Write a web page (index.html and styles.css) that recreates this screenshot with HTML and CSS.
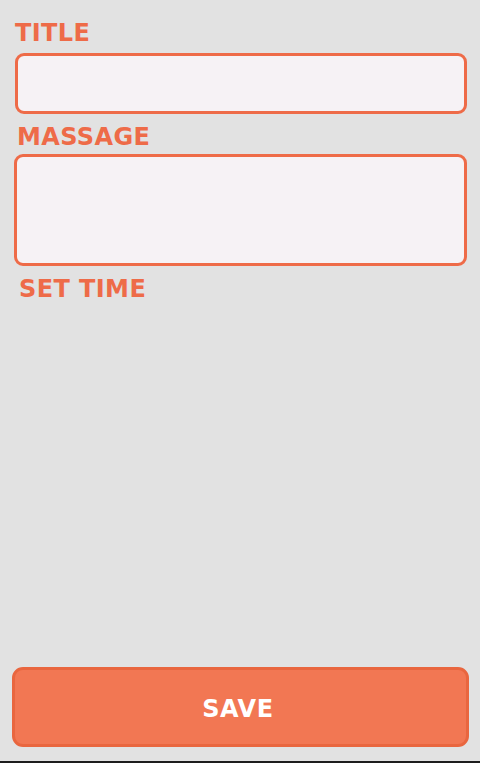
FILE: index.html
```html
<!DOCTYPE html>
<html>
<head>
<meta charset="utf-8">
<link rel="stylesheet" href="styles.css">
</head>
<body>
<div class="screen">
  <form class="form">
    <label class="label label-title">TITLE</label>
    <input class="field field-title" type="text">
    <label class="label label-message">MASSAGE</label>
    <textarea class="field field-message"></textarea>
    <label class="label label-time">SET TIME</label>
  </form>
  <div class="actions">
    <button class="save" type="button">SAVE</button>
  </div>
  <div class="bottom-edge"></div>
</div>
</body>
</html>
```
FILE: styles.css
```css
html, body {
  margin: 0;
  padding: 0;
  background: #e2e2e2;
}
.screen {
  height: 763px;
  display: flex;
  flex-direction: column;
  font-family: "DejaVu Sans", Verdana, sans-serif;
}
.form {
  flex: 1;
  display: flex;
  flex-direction: column;
  padding: 19px 13px 0 14px;
}
.label {
  display: block;
  color: #ee6b48;
  font-weight: bold;
  font-size: 24px;
  line-height: 28px;
  letter-spacing: 0.4px;
}
.label-title {
  margin-left: 1px;
}
.label-message {
  margin-top: 9px;
  margin-left: 3px;
}
.label-time {
  margin-top: 9px;
  margin-left: 5px;
}
.field {
  box-sizing: border-box;
  display: block;
  background: #f6f2f5;
  border: 3px solid #ee6b48;
  border-radius: 9px;
  outline: none;
  margin: 0;
  padding: 0;
  resize: none;
  font-family: inherit;
}
.field-title {
  margin-top: 6px;
  margin-left: 1px;
  height: 61px;
  width: 452px;
}
.field-message {
  margin-top: 3px;
  height: 112px;
  width: 453px;
}
.actions {
  padding: 0 11px 14px 12px;
}
.save {
  box-sizing: border-box;
  display: block;
  width: 457px;
  height: 80px;
  background: #f27753;
  border: 3px solid #e9663f;
  border-radius: 11px;
  color: #ffffff;
  font-family: inherit;
  font-weight: bold;
  font-size: 24px;
  letter-spacing: 0.6px;
  padding: 3px 5px 0 0;
  cursor: pointer;
}
.bottom-edge {
  height: 2px;
  background: #1d1d1d;
}
```
